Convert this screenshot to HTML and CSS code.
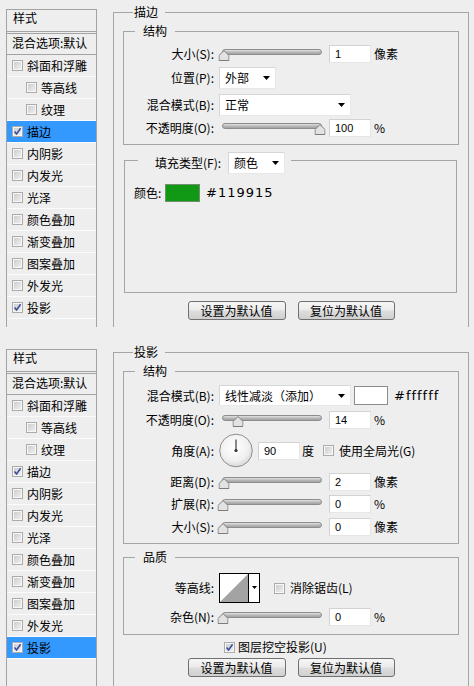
FILE: index.html
```html
<!DOCTYPE html>
<html lang="zh-CN">
<head>
<meta charset="utf-8">
<title>图层样式</title>
<link rel="stylesheet" href="styles.css">
</head>
<body>
<svg class="defs" width="0" height="0" aria-hidden="true">
  <defs>
    <symbol id="thumb" viewBox="0 0 11 11"><path d="M5.5 0.5 L10.5 5.5 V10.5 H0.5 V5.5 Z" fill="#e2e2e2" stroke="#7c7c7c"/></symbol>
    <symbol id="check" viewBox="0 0 9 9"><path d="M1.5 4.5 L3.6 7 L7.6 1.2" fill="none" stroke="#3c4f9c" stroke-width="1.6"/></symbol>
    <symbol id="arrow" viewBox="0 0 7 4"><path d="M0 0 H7 L3.5 4 Z" fill="#000"/></symbol>
  </defs>
</svg>

<div class="dialog">
  <div class="sidebar">
    <div class="side-head">样式</div>
    <div class="side-blend">混合选项:默认</div>
    <div class="side-item"><span class="cb"></span>斜面和浮雕</div>
    <div class="side-item sub"><span class="cb"></span>等高线</div>
    <div class="side-item sub"><span class="cb"></span>纹理</div>
    <div class="side-item sel"><span class="cb"><svg width="9" height="9"><use href="#check"/></svg></span>描边</div>
    <div class="side-item"><span class="cb"></span>内阴影</div>
    <div class="side-item"><span class="cb"></span>内发光</div>
    <div class="side-item"><span class="cb"></span>光泽</div>
    <div class="side-item"><span class="cb"></span>颜色叠加</div>
    <div class="side-item"><span class="cb"></span>渐变叠加</div>
    <div class="side-item"><span class="cb"></span>图案叠加</div>
    <div class="side-item"><span class="cb"></span>外发光</div>
    <div class="side-item"><span class="cb"><svg width="9" height="9"><use href="#check"/></svg></span>投影</div>
  </div>

  <fieldset class="group outer">
    <legend>描边</legend>
    <fieldset class="group inner s1">
      <legend>结构</legend>
      <div class="row h18 mt6">
        <span class="lbl">大小(S):</span>
        <div class="slider"><div class="track"><svg class="thumb" style="left:1%" width="11" height="11"><use href="#thumb"/></svg></div></div>
        <span class="num">1</span><span class="unit">像素</span>
      </div>
      <div class="row h22 mt4">
        <span class="lbl">位置(P):</span>
        <div class="select w57"><span>外部</span><svg class="arr" width="7" height="4"><use href="#arrow"/></svg></div>
      </div>
      <div class="row h23 mt4">
        <span class="lbl">混合模式(B):</span>
        <div class="select w132"><span>正常</span><svg class="arr" width="7" height="4"><use href="#arrow"/></svg></div>
      </div>
      <div class="row h18 mt3">
        <span class="lbl">不透明度(O):</span>
        <div class="slider"><div class="track"><svg class="thumb" style="left:99%" width="11" height="11"><use href="#thumb"/></svg></div></div>
        <span class="num">100</span><span class="unit">%</span>
      </div>
    </fieldset>

    <fieldset class="group fill">
      <legend><span class="legend-inner"><span class="fill-lbl">填充类型(F):</span><span class="select w57 h22"><span>颜色</span><svg class="arr" width="7" height="4"><use href="#arrow"/></svg></span></span></legend>
      <div class="color-row">
        <span class="c-lbl">颜色:</span>
        <span class="swatch green"></span>
        <span class="hex">#119915</span>
      </div>
    </fieldset>

    <div class="buttons">
      <div class="btn a">设置为默认值</div>
      <div class="btn b">复位为默认值</div>
    </div>
  </fieldset>
</div>

<div class="dialog second">
  <div class="sidebar">
    <div class="side-head">样式</div>
    <div class="side-blend">混合选项:默认</div>
    <div class="side-item"><span class="cb"></span>斜面和浮雕</div>
    <div class="side-item sub"><span class="cb"></span>等高线</div>
    <div class="side-item sub"><span class="cb"></span>纹理</div>
    <div class="side-item"><span class="cb"><svg width="9" height="9"><use href="#check"/></svg></span>描边</div>
    <div class="side-item"><span class="cb"></span>内阴影</div>
    <div class="side-item"><span class="cb"></span>内发光</div>
    <div class="side-item"><span class="cb"></span>光泽</div>
    <div class="side-item"><span class="cb"></span>颜色叠加</div>
    <div class="side-item"><span class="cb"></span>渐变叠加</div>
    <div class="side-item"><span class="cb"></span>图案叠加</div>
    <div class="side-item"><span class="cb"></span>外发光</div>
    <div class="side-item sel"><span class="cb"><svg width="9" height="9"><use href="#check"/></svg></span>投影</div>
  </div>

  <fieldset class="group outer">
    <legend>投影</legend>
    <fieldset class="group inner s2">
      <legend>结构</legend>
      <div class="row h21 mt6">
        <span class="lbl">混合模式(B):</span>
        <div class="select w132 h21"><span>线性减淡（添加）</span><svg class="arr" width="7" height="4"><use href="#arrow"/></svg></div>
        <span class="swatch white"></span>
        <span class="hex">#ffffff</span>
      </div>
      <div class="row h18 mt5">
        <span class="lbl">不透明度(O):</span>
        <div class="slider"><div class="track"><svg class="thumb" style="left:15%" width="11" height="11"><use href="#thumb"/></svg></div></div>
        <span class="num">14</span><span class="unit">%</span>
      </div>
      <div class="row h35 mt4">
        <span class="lbl">角度(A):</span>
        <svg class="dial" width="34" height="35" viewBox="0 0 34 35">
          <defs>
            <radialGradient id="dialg" cx="0.45" cy="0.4" r="0.6">
              <stop offset="0" stop-color="#ffffff"/>
              <stop offset="0.7" stop-color="#f1f1f1"/>
              <stop offset="1" stop-color="#d9d9d9"/>
            </radialGradient>
          </defs>
          <circle cx="17" cy="17.5" r="16.3" fill="url(#dialg)" stroke="#8f8f8f"/>
          <line x1="17" y1="17.5" x2="17" y2="6.5" stroke="#4a4a4a" stroke-width="1.3"/>
          <circle cx="17" cy="17.5" r="1.6" fill="#333"/>
        </svg>
        <span class="num angle">90</span><span class="unit deg">度</span>
        <span class="cb gl"></span><span class="cb-txt">使用全局光(G)</span>
      </div>
      <div class="row h18 mt5">
        <span class="lbl">距离(D):</span>
        <div class="slider"><div class="track"><svg class="thumb" style="left:1.5%" width="11" height="11"><use href="#thumb"/></svg></div></div>
        <span class="num">2</span><span class="unit">像素</span>
      </div>
      <div class="row h18 mt4">
        <span class="lbl">扩展(R):</span>
        <div class="slider"><div class="track"><svg class="thumb" style="left:0%" width="11" height="11"><use href="#thumb"/></svg></div></div>
        <span class="num">0</span><span class="unit">%</span>
      </div>
      <div class="row h18 mt5">
        <span class="lbl">大小(S):</span>
        <div class="slider"><div class="track"><svg class="thumb" style="left:0%" width="11" height="11"><use href="#thumb"/></svg></div></div>
        <span class="num">0</span><span class="unit">像素</span>
      </div>
    </fieldset>

    <fieldset class="group inner quality">
      <legend>品质</legend>
      <div class="row h30 mt8">
        <span class="lbl">等高线:</span>
        <svg class="contour" width="41" height="30" viewBox="0 0 41 30">
          <rect x="0.5" y="0.5" width="40" height="29" fill="#fff" stroke="#000"/>
          <path d="M1 29 L29 1 V29 Z" fill="#a3a3a3"/>
          <line x1="29.5" y1="0.5" x2="29.5" y2="29.5" stroke="#000"/>
          <path d="M33 13 H38 L35.5 16 Z" fill="#000"/>
        </svg>
        <span class="cb aa"></span><span class="cb-txt">消除锯齿(L)</span>
      </div>
      <div class="row h18 mt5">
        <span class="lbl">杂色(N):</span>
        <div class="slider"><div class="track"><svg class="thumb" style="left:0%" width="11" height="11"><use href="#thumb"/></svg></div></div>
        <span class="num">0</span><span class="unit">%</span>
      </div>
    </fieldset>

    <div class="knock">
      <span class="cb"><svg width="9" height="9"><use href="#check"/></svg></span><span class="cb-txt">图层挖空投影(U)</span>
    </div>

    <div class="buttons b2">
      <div class="btn a">设置为默认值</div>
      <div class="btn b">复位为默认值</div>
    </div>
  </fieldset>
</div>
</body>
</html>
```

FILE: styles.css
```css
* { box-sizing: border-box; }

html, body {
  margin: 0;
  padding: 0;
}

body {
  width: 474px;
  height: 686px;
  overflow: hidden;
  background: #eeeeee;
  color: #000;
  font-family: "Noto Sans CJK SC", "Liberation Sans", sans-serif;
  font-size: 12px;
  line-height: 16px;
}

.defs { position: absolute; width: 0; height: 0; overflow: hidden; }

.dialog {
  display: flex;
  height: 340px;
}
.dialog.second { height: 346px; }

/* ---------- sidebar ---------- */
.sidebar {
  width: 91px;
  flex: none;
  margin: 9px 0 13px 6px;
  border: 1px solid #a3a3a3;
  border-bottom: none;
}
.second .sidebar { margin-bottom: 0; }

.side-head {
  height: 24px;
  padding-left: 6px;
  border-bottom: 3px double #a3a3a3;
}

.side-blend {
  height: 21px;
  padding: 1px 0 0 5px;
  border-bottom: 1px solid #a3a3a3;
}

.side-item {
  height: 22px;
  display: flex;
  align-items: center;
  padding-left: 5px;
  border-bottom: 1px solid #fbfbfb;
}
.side-item.sub { padding-left: 19px; }
.side-item.sel { background: #3399ff; }
.side-item .cb { margin-right: 4px; }

/* ---------- checkbox ---------- */
.cb {
  width: 11px;
  height: 11px;
  flex: none;
  display: inline-flex;
  align-items: center;
  justify-content: center;
  border: 1px solid #ababab;
  background: linear-gradient(135deg, #c9c9c9, #f3f3f3);
  box-shadow: inset 0 0 0 1px #f7f7f7;
}
.cb svg { display: block; }
.cb-txt { margin-left: 4px; white-space: nowrap; }

/* ---------- group boxes ---------- */
.group {
  display: block;
  min-width: 0;
  margin: 0;
  padding: 0;
  border: 1px solid #a5a5a5;
}
.group > legend {
  height: 16px;
  line-height: 16px;
  padding: 0;
  white-space: nowrap;
}

.outer {
  flex: 1;
  margin: 4px 5px 13px 16px;
  padding: 0 9px;
  border-bottom: none;
}
.second .outer { margin-bottom: 0; }
.outer > legend {
  margin-left: 10px;
  padding: 0 7px 0 1px;
}

.inner { padding: 0 0 7px 0; margin-top: 3px; }
.inner > legend {
  margin-left: 11px;
  padding: 0 8px;
}
.quality { margin-top: 5px; padding-bottom: 8px; }

.fill {
  margin: 7px 2px 0 1px;
  padding: 0 0 90px 9px;
}
.fill > legend {
  margin-left: 4px;
  padding: 0 6px 0 17px;
}
.legend-inner {
  display: inline-flex;
  align-items: center;
  height: 22px;
  vertical-align: top;
}
.fill-lbl { margin-right: 7px; }

/* ---------- rows ---------- */
.row {
  display: flex;
  align-items: center;
  white-space: nowrap;
}
.h18 { height: 18px; }
.h21 { height: 21px; }
.h22 { height: 22px; }
.h23 { height: 23px; }
.h30 { height: 30px; }
.h35 { height: 35px; }
.mt3 { margin-top: 3px; }
.mt4 { margin-top: 4px; }
.mt5 { margin-top: 5px; }
.mt6 { margin-top: 6px; }
.mt8 { margin-top: 8px; }

.lbl {
  width: 90px;
  flex: none;
  margin-right: 5px;
  text-align: right;
}

/* ---------- slider ---------- */
.slider {
  width: 110px;
  height: 11px;
  flex: none;
  padding: 0 7px 0 3px;
}
.track {
  position: relative;
  height: 6px;
  border: 1px solid #8d8d8d;
  border-radius: 3px;
  background: linear-gradient(#e2e2e2, #b4b4b4 60%, #a4a4a4);
}
.thumb {
  position: absolute;
  top: 0;
  transform: translateX(-50%);
  display: block;
}

/* ---------- inputs ---------- */
.num {
  width: 42px;
  height: 18px;
  flex: none;
  background: #fff;
  border: 1px solid #d2d2d2;
  border-right-color: #e6e6e6;
  border-bottom-color: #e6e6e6;
  padding-left: 5px;
  font-family: "Liberation Sans", sans-serif;
  font-size: 11px;
  line-height: 16px;
}
.unit { margin-left: 3px; }

.select {
  height: 22px;
  flex: none;
  display: flex;
  align-items: center;
  background: #fff;
  border: 1px solid #d6d6d6;
  border-right-color: #e8e8e8;
  border-bottom-color: #e8e8e8;
  padding-left: 5px;
}
.select.h21 { height: 21px; }
.select .arr { margin-left: auto; margin-right: 5px; display: block; flex: none; }
.w57 { width: 57px; }
.w132 { width: 132px; }

.swatch {
  flex: none;
  display: block;
  border: 1px solid #8c8c8c;
}
.swatch.green {
  width: 35px;
  height: 18px;
  background: #119915;
  border-color: #6f8f70;
  margin-left: 3px;
}
.swatch.white {
  width: 34px;
  height: 19px;
  background: #fff;
  margin-left: 3px;
}
.hex {
  font-family: "DejaVu Sans", sans-serif;
  font-size: 13px;
  letter-spacing: 1px;
  margin-left: 6px;
}

.color-row {
  display: flex;
  align-items: center;
  height: 18px;
  margin-top: 16px;
}
.c-lbl { width: 28px; }

.dial { display: block; flex: none; }
.num.angle { margin-left: 5px; }
.unit.deg { margin-left: 2px; }
.cb.gl { margin-left: 9px; }
.cb.gl + .cb-txt { margin-left: 5px; }

.contour { display: block; flex: none; }
.cb.aa { margin-left: 14px; }
.cb.aa + .cb-txt { margin-left: 5px; }

.knock {
  display: flex;
  align-items: center;
  height: 16px;
  margin: 4px 0 0 101px;
}
.knock .cb-txt { margin-left: 3px; }

/* ---------- buttons ---------- */
.buttons {
  display: flex;
  justify-content: center;
  gap: 12px;
  margin-top: 8px;
}
.buttons.b2 { margin-top: 3px; }
.btn {
  height: 19px;
  border: 1px solid #707070;
  border-radius: 3px;
  background: linear-gradient(#f6f6f6 0%, #ececec 45%, #dcdcdc 55%, #d0d0d0 100%);
  text-align: center;
  line-height: 17px;
  font-size: 12px;
}
.btn.a { width: 98px; }
.btn.b { width: 97px; }
```
